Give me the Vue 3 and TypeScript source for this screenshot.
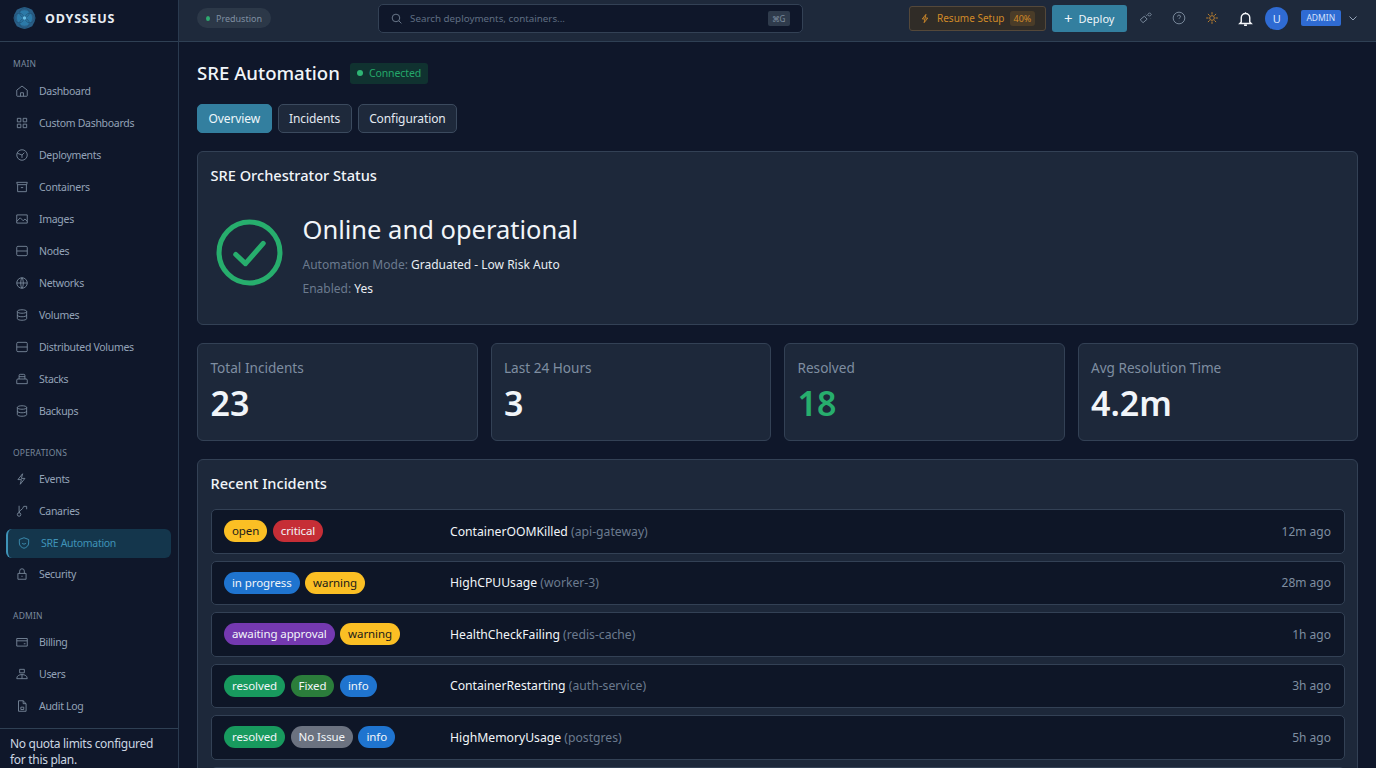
<script setup lang="ts">
interface NavItem {
  label: string
  icon: string
  active?: boolean
}

interface NavSection {
  title: string
  items: NavItem[]
}

interface Badge {
  text: string
  kind: string
}

interface Incident {
  badges: Badge[]
  name: string
  target: string
  time: string
}

const icons: Record<string, string> = {
  home: 'M3 10.500 12 3.500l9 7V20a1 1 0 0 1-1 1H4a1 1 0 0 1-1-1zM9.500 21v-6h5v6',
  grid: 'M4 4h6v6H4zM14 4h6v6h-6zM4 14h6v6H4zM14 14h6v6h-6z',
  box: 'M12 3a9 9 0 1 1 0 18 9 9 0 0 1 0-18zM12 12l4-4M12 12v5M4 9l8 3',
  archive: 'M3 4h18l-1 4H4zM4.500 8v12h15V8M10 13h4',
  image: 'M3 5h18v14H3zM3 16l6-6 5 5 3-3 4 4',
  server: 'M3 6a2 2 0 0 1 2-2h14a2 2 0 0 1 2 2v12a2 2 0 0 1-2 2H5a2 2 0 0 1-2-2zM3 12h18',
  globe: 'M12 3a9 9 0 1 1 0 18 9 9 0 0 1 0-18zM3 12h18M12 3c3 3 3 15 0 18M12 3c-3 3-3 15 0 18',
  db: 'M4 6c0-4 16-4 16 0v12c0 4-16 4-16 0zM4 6c0 4 16 4 16 0M4 12c0 4 16 4 16 0',
  stack: 'M3 14a2 2 0 0 1 2-2h14a2 2 0 0 1 2 2v6H3zM7 12V6a2 2 0 0 1 2-2h6a2 2 0 0 1 2 2v6M7 8h10',
  bolt: 'M13 3 5 13h6l-2 8 8-10h-6z',
  branch: 'M7 3v12M7 15a3 3 0 1 0 0 6 3 3 0 0 0 0-6zM7 15c0-5 6-4 8-11M15 4h5v5',
  shield: 'M12 3l8 3v6c0 5-4 8-8 9-4-1-8-4-8-9V6zM8.500 12c1 2.500 6 2.500 7 0',
  lock: 'M5 11h14v10H5zM8 11V7a4 4 0 0 1 8 0v4M12 15v2',
  card: 'M3 6h18v13H3zM3 10h18M15 15h3',
  users: 'M8 4h8v6H8zM3 20c0-5 4-7 9-7s9 2 9 7zM12 13v7',
  file: 'M6 3h8l5 5v13H6zM14 3v5h5M10 14h5v4h-5z',
}

const sections: NavSection[] = [
  {
    title: 'MAIN',
    items: [
      { label: 'Dashboard', icon: 'home' },
      { label: 'Custom Dashboards', icon: 'grid' },
      { label: 'Deployments', icon: 'box' },
      { label: 'Containers', icon: 'archive' },
      { label: 'Images', icon: 'image' },
      { label: 'Nodes', icon: 'server' },
      { label: 'Networks', icon: 'globe' },
      { label: 'Volumes', icon: 'db' },
      { label: 'Distributed Volumes', icon: 'server' },
      { label: 'Stacks', icon: 'stack' },
      { label: 'Backups', icon: 'db' },
    ],
  },
  {
    title: 'OPERATIONS',
    items: [
      { label: 'Events', icon: 'bolt' },
      { label: 'Canaries', icon: 'branch' },
      { label: 'SRE Automation', icon: 'shield', active: true },
      { label: 'Security', icon: 'lock' },
    ],
  },
  {
    title: 'ADMIN',
    items: [
      { label: 'Billing', icon: 'card' },
      { label: 'Users', icon: 'users' },
      { label: 'Audit Log', icon: 'file' },
    ],
  },
]

const tabs = ['Overview', 'Incidents', 'Configuration']

const stats = [
  { label: 'Total Incidents', value: '23', green: false },
  { label: 'Last 24 Hours', value: '3', green: false },
  { label: 'Resolved', value: '18', green: true },
  { label: 'Avg Resolution Time', value: '4.2m', green: false },
]

const incidents: Incident[] = [
  {
    badges: [{ text: 'open', kind: 'yellow' }, { text: 'critical', kind: 'red' }],
    name: 'ContainerOOMKilled',
    target: '(api-gateway)',
    time: '12m ago',
  },
  {
    badges: [{ text: 'in progress', kind: 'blue' }, { text: 'warning', kind: 'yellow' }],
    name: 'HighCPUUsage',
    target: '(worker-3)',
    time: '28m ago',
  },
  {
    badges: [{ text: 'awaiting approval', kind: 'purple' }, { text: 'warning', kind: 'yellow' }],
    name: 'HealthCheckFailing',
    target: '(redis-cache)',
    time: '1h ago',
  },
  {
    badges: [{ text: 'resolved', kind: 'green' }, { text: 'Fixed', kind: 'dark-green' }, { text: 'info', kind: 'blue' }],
    name: 'ContainerRestarting',
    target: '(auth-service)',
    time: '3h ago',
  },
  {
    badges: [{ text: 'resolved', kind: 'green' }, { text: 'No Issue', kind: 'grey' }, { text: 'info', kind: 'blue' }],
    name: 'HighMemoryUsage',
    target: '(postgres)',
    time: '5h ago',
  },
]
</script>

<template>
  <div class="app">
    <aside class="sidebar">
      <div class="brand">
        <svg class="logo" viewBox="0 0 24 24">
          <polygon points="12,0.500 16,1.500 20,3.500 22.500,8 23.500,12 22.500,16 20,20.500 16,22.500 12,23.500 8,22.500 4,20.500 1.500,16 0.500,12 1.500,8 4,3.500 8,1.500" fill="#2a5f87" />
          <circle cx="12" cy="12" r="8" fill="#2c7aa8" />
          <g fill="none" stroke="#1f4f74" stroke-width="0.700">
            <circle cx="12" cy="6.500" r="5" />
            <circle cx="12" cy="17.500" r="5" />
            <circle cx="6.500" cy="12" r="5" />
            <circle cx="17.500" cy="12" r="5" />
          </g>
          <circle cx="12" cy="12" r="1.800" fill="#6cc0e6" />
        </svg>
        <span class="brand-name">ODYSSEUS</span>
      </div>
      <nav class="nav">
        <section v-for="section in sections" :key="section.title" class="nav-section">
          <div class="nav-title">{{ section.title }}</div>
          <a v-for="item in section.items" :key="item.label" class="nav-item" :class="{ active: item.active }">
            <svg class="nav-icon" viewBox="0 0 24 24"><path :d="icons[item.icon]" /></svg>
            {{ item.label }}
          </a>
        </section>
      </nav>
      <div class="quota">No quota limits configured for this plan.</div>
    </aside>

    <div class="content">
      <header class="topbar">
        <div class="env"><span class="env-dot"></span>Predustion</div>
        <div class="search">
          <svg class="search-icon" viewBox="0 0 24 24"><circle cx="11" cy="11" r="7" /><path d="m16.500 16.500 4.500 4.500" /></svg>
          <span class="search-text">Search deployments, containers...</span>
          <kbd class="kbd">⌘G</kbd>
        </div>
        <div class="actions">
          <button class="resume">
            <svg class="resume-icon" viewBox="0 0 24 24"><path d="M13 3 5 13h6l-2 8 8-10h-6z" /></svg>
            Resume Setup
            <span class="resume-pct">40%</span>
          </button>
          <button class="deploy"><span class="deploy-plus">+</span>Deploy</button>
          <svg class="top-icon muted" viewBox="0 0 24 24"><path d="M2 15l7-6 5 5-7 6zM15 6l3-3 3 3-3 3zM12 9l2-2M11 5v.500M20 12v.500" /></svg>
          <svg class="top-icon muted" viewBox="0 0 24 24"><circle cx="12" cy="12" r="10" /><path d="M9.500 9.500a2.500 2.500 0 1 1 3.500 2.300c-.7.400-1 1-1 1.700M12 17v.500" /></svg>
          <svg class="top-icon sun" viewBox="0 0 24 24"><circle cx="12" cy="12" r="4" /><path d="M12 2v4M12 18v4M2 12h4M18 12h4M5 5l3 3M16 16l3 3M5 19l3-3M16 8l3-3" /></svg>
          <svg class="top-icon bell" viewBox="0 0 24 24"><path d="M6 17V11a6 6 0 0 1 12 0v6l2 2H4zM10 21.500h4M12 3v2" /></svg>
          <span class="avatar">U</span>
          <span class="role">ADMIN</span>
          <svg class="chevron" viewBox="0 0 24 24"><path d="m5 9 7 7 7-7" /></svg>
        </div>
      </header>

      <main class="main">
        <div class="page-head">
          <h1 class="page-title">SRE Automation</h1>
          <span class="connected"><span class="connected-dot"></span>Connected</span>
        </div>

        <div class="tabs">
          <button v-for="(tab, i) in tabs" :key="tab" class="tab" :class="{ current: i === 0 }">{{ tab }}</button>
        </div>

        <section class="card status-card">
          <h2 class="card-title">SRE Orchestrator Status</h2>
          <div class="status-body">
            <svg class="status-icon" viewBox="0 0 66 66">
              <circle cx="33" cy="33" r="30" />
              <path d="m19.500 35 9.500 9 17.500-20" />
            </svg>
            <div>
              <div class="status-headline">Online and operational</div>
              <div class="status-line first">Automation Mode: <b>Graduated - Low Risk Auto</b></div>
              <div class="status-line">Enabled: <b>Yes</b></div>
            </div>
          </div>
        </section>

        <div class="stats">
          <div v-for="stat in stats" :key="stat.label" class="card stat">
            <div class="stat-label">{{ stat.label }}</div>
            <div class="stat-value" :class="{ 'stat-green': stat.green }">{{ stat.value }}</div>
          </div>
        </div>

        <section class="card recent">
          <h2 class="card-title">Recent Incidents</h2>
          <div class="rows">
            <div v-for="incident in incidents" :key="incident.name" class="row">
              <div class="badges">
                <span v-for="badge in incident.badges" :key="badge.text" class="badge" :class="badge.kind">{{ badge.text }}</span>
              </div>
              <div class="incident-name">{{ incident.name }} <span class="incident-target">{{ incident.target }}</span></div>
              <div class="incident-time">{{ incident.time }}</div>
            </div>
            <div class="row"></div>
          </div>
        </section>
      </main>
    </div>
  </div>
</template>

<style>
html,
body {
  margin: 0;
  height: 100%;
  background: #0f172a;
}
</style>

<style scoped>
* {
  box-sizing: border-box;
}

.app {
  display: flex;
  width: 1376px;
  height: 768px;
  overflow: hidden;
  font-family: 'Noto Sans', 'Open Sans', sans-serif;
  color: #f1f5f9;
  background: #0f172a;
}

.sidebar {
  display: flex;
  flex-direction: column;
  flex: 0 0 179px;
  background: #0f172a;
  border-right: 1px solid #2a3a4f;
}

.brand {
  display: flex;
  align-items: center;
  gap: 9px;
  flex: 0 0 42px;
  padding: 0 0 5px 13px;
  border-bottom: 1px solid #2f4054;
}

.logo {
  width: 23px;
  height: 24px;
}

.brand-name {
  font-size: 12.500px;
  font-weight: 700;
  letter-spacing: 0.8px;
  color: #e8edf3;
}

.nav {
  flex: 1;
  min-height: 0;
  padding-top: 14px;
  overflow: hidden;
}

.nav-section {
  margin-bottom: 18px;
}

.nav-title {
  height: 16px;
  padding-left: 13px;
  font-size: 8.500px;
  line-height: 16px;
  letter-spacing: 0.2px;
  color: #79899c;
}

.nav-item {
  display: flex;
  align-items: center;
  gap: 10px;
  height: 32px;
  margin-right: 7px;
  padding-left: 15px;
  font-size: 10.500px;
  letter-spacing: -0.3px;
  color: #94a3b8;
}

.nav-section .nav-item:first-of-type {
  margin-top: 2.500px;
}

.nav-section:last-child .nav-item:first-of-type {
  margin-top: 1.500px;
}

.nav-item.active {
  height: 29px;
  margin: 1.500px 7px 0.500px 6px;
  padding-left: 9px;
  color: #3f93b8;
  background: #14364c;
  border-left: 2px solid #3f93b8;
  border-radius: 6px;
}

.nav-icon {
  flex: none;
  width: 14px;
  height: 14px;
  fill: none;
  stroke: #7c8b9e;
  stroke-width: 1.500;
}

.active .nav-icon {
  stroke: #3f93b8;
}

.quota {
  flex: 0 0 40px;
  padding: 7px 10px 0;
  font-size: 12px;
  line-height: 15.500px;
  letter-spacing: -0.3px;
  color: #cbd5e1;
  border-top: 1px solid #2f4054;
}

.content {
  display: flex;
  flex-direction: column;
  flex: 1;
  min-width: 0;
}

.topbar {
  display: flex;
  align-items: center;
  flex: 0 0 42px;
  padding: 0 0 5px 18px;
  background: #1e293b;
  border-bottom: 1px solid #2f4054;
}

.env {
  display: flex;
  align-items: center;
  gap: 6px;
  width: 74px;
  height: 20px;
  padding: 0 9px;
  font-size: 9px;
  color: #7f8ea1;
  background: #2c3848;
  border-radius: 10px;
}

.env-dot {
  width: 5px;
  height: 5px;
  background: #2eab70;
  border-radius: 50%;
}

.search {
  display: flex;
  align-items: center;
  width: 424.500px;
  height: 29px;
  margin-left: 107px;
  padding: 0 12px 0 11px;
  background: #0f172a;
  border: 1px solid #334155;
  border-radius: 5px;
}

.search-icon {
  width: 13px;
  height: 13px;
  fill: none;
  stroke: #7c8b9e;
  stroke-width: 1.500;
}

.search-text {
  flex: 1;
  margin-left: 7px;
  font-size: 9.800px;
  color: #5f6e82;
}

.kbd {
  width: 22px;
  height: 15px;
  font-family: inherit;
  font-size: 8px;
  line-height: 15px;
  text-align: center;
  color: #7c8b9e;
  background: #2f3b4c;
  border-radius: 2px;
}

.actions {
  display: flex;
  align-items: center;
  margin-left: 106.500px;
}

.resume {
  display: flex;
  align-items: center;
  width: 137px;
  height: 25px;
  padding: 0 0 0 10px;
  font-family: inherit;
  font-size: 10px;
  color: #d18a28;
  background: #302c27;
  border: 1px solid #54483a;
  border-radius: 3px;
}

.resume-icon {
  width: 11px;
  height: 11px;
  margin-right: 6px;
  fill: none;
  stroke: #d18a28;
  stroke-width: 2;
}

.resume-pct {
  margin-left: 5px;
  padding: 1px 4px;
  font-size: 9px;
  background: #4a3c28;
  border-radius: 3px;
}

.deploy {
  display: flex;
  align-items: center;
  justify-content: center;
  gap: 6px;
  width: 74.500px;
  height: 27px;
  margin-left: 6px;
  font-family: inherit;
  font-size: 11px;
  color: #eef5f9;
  background: #337f9f;
  border: 0;
  border-radius: 3px;
}

.deploy-plus {
  font-size: 15px;
  line-height: 15px;
}

.top-icon {
  width: 14px;
  height: 14px;
  fill: none;
  stroke-width: 1.500;
}

.top-icon + .top-icon {
  margin-left: 19px;
}

.deploy + .top-icon {
  margin-left: 12.300px;
}

.muted {
  stroke: #8493a6;
}

.sun {
  stroke: #d08a2c;
}

.top-icon.bell {
  width: 17px;
  height: 17px;
  margin-left: 18px;
  stroke: #f5f7fa;
  stroke-width: 2;
}

.avatar {
  width: 23px;
  height: 23px;
  margin-left: 11.500px;
  font-size: 11px;
  line-height: 23px;
  text-align: center;
  color: #dbe7ff;
  background: #2f6bd3;
  border-radius: 50%;
}

.role {
  width: 40px;
  height: 16px;
  margin-left: 12.500px;
  font-size: 8.500px;
  line-height: 16px;
  text-align: center;
  color: #d5e2fb;
  background: #2f6bd3;
  border-radius: 2px;
}

.chevron {
  width: 12px;
  height: 12px;
  margin-left: 6px;
  fill: none;
  stroke: #94a3b8;
  stroke-width: 2;
}

.main {
  flex: 1;
  min-height: 0;
  padding: 20px 18px 0;
  overflow: hidden;
}

.page-head {
  display: flex;
  align-items: center;
  gap: 10px;
  height: 22px;
}

.page-title {
  margin: 0 0 2px;
  font-size: 18.600px;
  font-weight: 500;
  color: #f1f5f9;
}

.connected {
  display: flex;
  align-items: center;
  gap: 6px;
  height: 21px;
  padding: 0 7px;
  font-size: 10.500px;
  letter-spacing: -0.1px;
  color: #25a86b;
  background: #103230;
  border-radius: 3px;
}

.connected-dot {
  width: 6px;
  height: 6px;
  background: #2eb574;
  border-radius: 50%;
}

.tabs {
  display: flex;
  gap: 6px;
  margin-top: 20px;
}

.tab {
  height: 29px;
  padding: 0 10.500px;
  font-family: inherit;
  font-size: 12px;
  letter-spacing: -0.1px;
  color: #e2e8f0;
  background: #1e293b;
  border: 1px solid #3b4a5e;
  border-radius: 5px;
}

.tab.current {
  color: #eef7fb;
  background: #337f9f;
  border-color: #337f9f;
}

.card {
  background: #1d283a;
  border: 1px solid #334155;
  border-radius: 6px;
}

.card-title {
  margin: 0;
  font-size: 14.600px;
  font-weight: 500;
  line-height: 20px;
  color: #f1f5f9;
}

.status-card {
  height: 174px;
  margin-top: 18px;
  padding: 13px 12.500px;
}

.status-body {
  display: flex;
  align-items: flex-start;
  gap: 20px;
  margin-top: 26px;
  padding-left: 5px;
}

.status-icon {
  flex: none;
  width: 67px;
  height: 67px;
  margin-top: 8px;
  fill: none;
  stroke: #27ae6d;
  stroke-width: 5;
  stroke-linecap: round;
  stroke-linejoin: round;
}

.status-headline {
  font-size: 25.500px;
  line-height: 36px;
  color: #f1f5f9;
}

.status-line {
  margin-top: 3px;
  font-size: 12px;
  line-height: 21px;
  color: #6b7a8e;
}

.status-line.first {
  margin-top: 6.500px;
}

.status-line b {
  font-weight: 400;
  color: #e8edf3;
}

.stats {
  display: grid;
  grid-template-columns: repeat(4, 1fr);
  gap: 13px;
  margin-top: 18px;
}

.stat {
  height: 98px;
  padding: 14px 12.500px;
}

.stat-label {
  font-size: 13.600px;
  line-height: 20px;
  color: #7f8ea1;
}

.stat-value {
  margin-top: 2px;
  font-size: 34px;
  font-weight: 600;
  line-height: 46px;
  color: #f1f5f9;
}

.stat-green {
  color: #27ae6d;
}

.recent {
  height: 340px;
  margin-top: 18px;
  padding: 13px 12.500px;
}

.rows {
  display: flex;
  flex-direction: column;
  gap: 7px;
  margin-top: 16px;
}

.row {
  display: flex;
  align-items: center;
  flex: none;
  height: 44.500px;
  padding: 0 12.500px;
  background: #0e1627;
  border: 1px solid #334155;
  border-radius: 5px;
}

.badges {
  display: flex;
  gap: 5.500px;
  flex: 0 0 226px;
}

.badge {
  height: 22px;
  padding: 0 8px;
  font-size: 11.500px;
  line-height: 22px;
  letter-spacing: -0.1px;
  color: #f1f5f9;
  border-radius: 11px;
}

.yellow {
  color: #1a1a1a;
  background: #fbbf24;
}

.red {
  background: #c62e36;
}

.blue {
  background: #1f74cf;
}

.purple {
  background: #7439b0;
}

.green {
  background: #189a5e;
}

.dark-green {
  background: #2b7d3b;
}

.grey {
  background: #6b7280;
}

.incident-name {
  flex: 1;
  font-size: 12.200px;
  color: #f1f5f9;
}

.incident-target {
  font-size: 12.200px;
  color: #6b7a8e;
}

.incident-time {
  font-size: 12px;
  color: #7f8ea1;
}
</style>
